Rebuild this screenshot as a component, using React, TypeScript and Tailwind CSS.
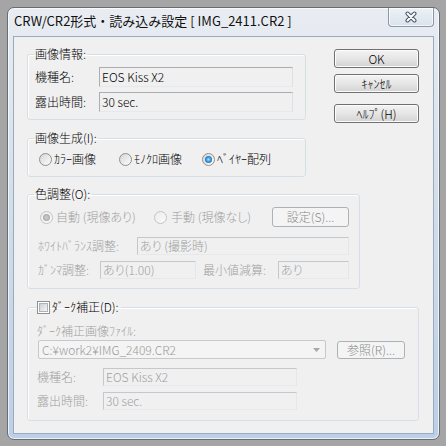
import React from "react";

const FONT =
  "font-['Noto_Sans_CJK_JP','Noto_Sans_CJK_SC',sans-serif] [font-feature-settings:'palt']";

function Radio({ checked = false, disabled = false }: { checked?: boolean; disabled?: boolean }) {
  return (
    <span
      className={`w-[13px] h-[13px] rounded-full border flex items-center justify-center shrink-0 ${
        disabled
          ? "border-[#c2c4c6] bg-linear-to-br from-[#ececec] to-[#fafafa]"
          : "border-[#8e8f8f] bg-linear-to-br from-[#d6d6d6] to-[#fdfdfd]"
      }`}
    >
      {checked && (
        <span
          className={`w-[7px] h-[7px] rounded-full ${
            disabled
              ? "bg-radial from-[#d0d0d0] to-[#9c9c9c]"
              : "bg-radial from-[#9ee3ff] via-[#2f8fd8] to-[#1a4f98]"
          }`}
        />
      )}
    </span>
  );
}

function CheckBox() {
  return (
    <span className="w-[13px] h-[13px] border border-[#8e8f8f] bg-white flex items-center justify-center shrink-0">
      <span className="w-[9px] h-[9px] bg-linear-to-br from-[#cbcfd5] to-[#f6f6f6] border border-[#aeb3b9]" />
    </span>
  );
}

function Btn({
  children,
  className = "",
  disabled = false,
}: {
  children: React.ReactNode;
  className?: string;
  disabled?: boolean;
}) {
  return (
    <div
      className={`rounded-[3px] border flex items-center justify-center text-[12px] leading-[14px] shrink-0 ${
        disabled
          ? "border-[#adb2b5] bg-[#f4f4f4] text-[#8a8a8a]"
          : "border-[#707070] bg-linear-to-b from-[#f3f3f3] via-[#e6e6e6] to-[#d2d2d2] text-black shadow-[inset_0_0_0_1px_#fcfcfc]"
      } ${className}`}
    >
      {children}
    </div>
  );
}

function Edit({
  value,
  className = "",
  disabled = false,
}: {
  value: string;
  className?: string;
  disabled?: boolean;
}) {
  return (
    <div
      className={`border bg-[#f0f0f0] flex items-center pl-[2px] text-[12px] leading-[14px] whitespace-nowrap shrink-0 ${
        disabled
          ? "border-[#c4c8cc] border-r-[#e4e7ea] border-b-[#e6e9ec] text-[#a0a0a0]"
          : "border-[#abadb3] border-r-[#dbdfe6] border-b-[#e3e9ef] text-black"
      } ${className}`}
    >
      {value}
    </div>
  );
}

function Group({
  legend,
  className = "",
  legendClass = "",
  children,
}: {
  legend: React.ReactNode;
  className?: string;
  legendClass?: string;
  children: React.ReactNode;
}) {
  return (
    <fieldset
      className={`border border-[#d5dfe5] rounded-[3px] shadow-[inset_1px_1px_0_#ffffff] min-w-0 shrink-0 ${className}`}
    >
      <legend className={`leading-[14px] h-[14px] text-[12px] ${legendClass}`}>{legend}</legend>
      {children}
    </fieldset>
  );
}

export default function App() {
  const gray = "text-[#a0a0a0]";
  return (
    <div className={`w-[446px] h-[446px] bg-[#a5a5a5] p-[7px] font-light ${FONT}`}>
      <div className="w-[433px] h-[433px] rounded-[7px] border border-[#666d77] bg-linear-to-b from-[#e9edf2] via-[#d0dcea] to-[#bccfe6] shadow-[inset_0_0_0_1px_rgba(255,255,255,0.7)] flex flex-col px-[5px] pb-[5px] overflow-hidden">
        {/* Title bar */}
        <div className="h-[28px] shrink-0 flex justify-between items-start">
          <div className="mt-[5px] ml-[1px] text-[13px] leading-[16px] font-normal text-[#111] whitespace-nowrap [font-feature-settings:normal]">
            CRW/CR2形式・読み込み設定 [ IMG_2411.CR2 ]
          </div>
          <div className="w-[46px] h-[19px] rounded-b-[4px] border border-t-0 border-[#8a98aa] bg-linear-to-b from-[#eef2f6] to-[#d9e2ec] shadow-[inset_0_0_0_1px_rgba(255,255,255,0.7)] flex items-center justify-center">
            <svg width="14" height="12" viewBox="0 0 14 12">
              <path d="M3.5 2.5 L10.5 9.5 M10.5 2.5 L3.5 9.5" stroke="#4a5566" strokeWidth="4" strokeLinecap="round" />
              <path d="M3.5 2.5 L10.5 9.5 M10.5 2.5 L3.5 9.5" stroke="#ffffff" strokeWidth="2" strokeLinecap="round" />
            </svg>
          </div>
        </div>

        {/* Client area */}
        <div className="flex-1 min-h-0 border border-[#9aabbd] bg-[#f0f0f0] pl-[13px] pt-[10px] text-[12px] leading-[14px] text-black flex flex-col items-start">
          <div className="flex shrink-0">
            {/* left column */}
            <div className="w-[279px] flex flex-col">
              <Group legend="画像情報:" legendClass="ml-[6px] px-[1px]">
                <div className="pt-[6px] pb-[7px] pl-[7px] pr-[12px] flex flex-col gap-[5px]">
                  <div className="flex items-center">
                    <span className="w-[64px] shrink-0">機種名:</span>
                    <Edit value="EOS Kiss X2" className="h-[20px] flex-1" />
                  </div>
                  <div className="flex items-center">
                    <span className="w-[64px] shrink-0">露出時間:</span>
                    <Edit value="30 sec." className="h-[20px] flex-1" />
                  </div>
                </div>
              </Group>

              <Group legend="画像生成(I):" className="mt-[11px]" legendClass="ml-[6px] px-[1px]">
                <div className="pt-[7px] pb-[10px] pl-[11px] flex items-center">
                  <div className="w-[80px] h-[14px] flex items-center gap-[2px]">
                    <Radio />
                    <span>ｶﾗｰ画像</span>
                  </div>
                  <div className="w-[83px] h-[14px] flex items-center gap-[2px]">
                    <Radio />
                    <span>ﾓﾉｸﾛ画像</span>
                  </div>
                  <div className="h-[14px] flex items-center gap-[2px]">
                    <Radio checked />
                    <span>ﾍﾞｲﾔｰ配列</span>
                  </div>
                </div>
              </Group>
            </div>

            {/* right column: buttons */}
            <div className="ml-[28px] w-[85px] flex flex-col pt-[2px]">
              <Btn className="h-[19px] w-[85px]">OK</Btn>
              <Btn className="h-[19px] w-[85px] mt-[6px]">ｷｬﾝｾﾙ</Btn>
              <Btn className="h-[19px] w-[85px] mt-[11px]">ﾍﾙﾌﾟ(H)</Btn>
            </div>
          </div>

          {/* 色調整 */}
          <Group legend="色調整(O):" className="mt-[10px] w-[333px]" legendClass="ml-[6px] px-[1px]">
            <div className="pt-[6px] pb-[9px] pl-[12px] flex flex-col">
              <div className="h-[20px] flex items-center">
                <div className={`w-[114px] flex items-center gap-[3px] ${gray}`}>
                  <Radio checked disabled />
                  <span>自動 (現像あり)</span>
                </div>
                <div className={`w-[118px] flex items-center gap-[4px] ${gray}`}>
                  <Radio disabled />
                  <span>手動 (現像なし)</span>
                </div>
                <Btn disabled className="w-[77px] h-[20px]">
                  設定(S)...
                </Btn>
              </div>
              <div className="mt-[10px] flex items-center -ml-[2px]">
                <span className={`w-[99px] shrink-0 ${gray}`}>ﾎﾜｲﾄﾊﾞﾗﾝｽ調整:</span>
                <Edit disabled value="あり (撮影時)" className="h-[18px] w-[212px]" />
              </div>
              <div className="mt-[6px] flex items-center -ml-[2px]">
                <span className={`w-[62px] shrink-0 ${gray}`}>ｶﾞﾝﾏ調整:</span>
                <Edit disabled value="あり(1.00)" className="h-[18px] w-[96px]" />
                <span className={`ml-[7px] w-[75px] shrink-0 ${gray}`}>最小値減算:</span>
                <Edit disabled value="あり" className="h-[18px] w-[71px]" />
              </div>
            </div>
          </Group>

          {/* ダーク補正 */}
          <Group
            legend={
              <span className="flex items-center gap-[2px] h-[14px]">
                <CheckBox />
                <span className="pr-[2px]">ﾀﾞｰｸ補正(D):</span>
              </span>
            }
            className="mt-[11px] w-[392px]"
            legendClass="ml-[9px]"
          >
            <div className={`pt-[10px] pb-[10px] pl-[9px] flex flex-col ${gray}`}>
              <div className="h-[14px] flex items-center">ﾀﾞｰｸ補正画像ﾌｧｲﾙ:</div>
              <div className="mt-[2px] flex items-center">
                <div className="ml-[1px] w-[288px] h-[19px] rounded-[2px] border border-[#c6c9cc] bg-[#f4f4f4] flex items-center justify-between pl-[3px] pr-[5px]">
                  <span className="text-[#9a9a9a]">C:¥work2¥IMG_2409.CR2</span>
                  <svg width="7" height="4" viewBox="0 0 7 4">
                    <path d="M0 0 L7 0 L3.5 4 Z" fill="#a8a8a8" />
                  </svg>
                </div>
                <Btn disabled className="ml-[11px] w-[68px] h-[18px]">
                  参照(R)...
                </Btn>
              </div>
              <div className="mt-[9px] flex items-center">
                <span className="w-[66px] shrink-0">機種名:</span>
                <Edit disabled value="EOS Kiss X2" className="h-[18px] w-[194px]" />
              </div>
              <div className="mt-[6px] flex items-center">
                <span className="w-[66px] shrink-0">露出時間:</span>
                <Edit disabled value="30 sec." className="h-[18px] w-[194px]" />
              </div>
            </div>
          </Group>
        </div>
      </div>
    </div>
  );
}
